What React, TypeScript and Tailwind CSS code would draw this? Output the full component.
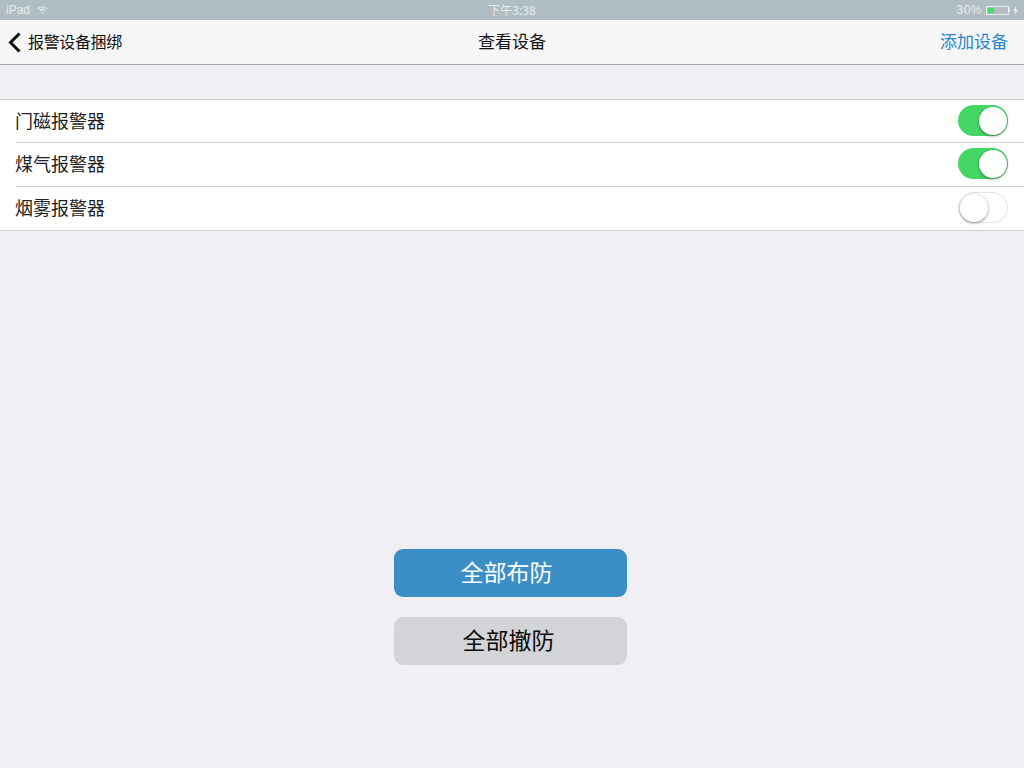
const devices = [
  { name: "门磁报警器", on: true },
  { name: "煤气报警器", on: true },
  { name: "烟雾报警器", on: false },
];

const cjk = "font-['Noto_Sans_CJK_SC','Liberation_Sans',sans-serif]";

const Toggle = ({ on }: { on: boolean }) => (
  <div
    className={`mb-[1px] flex h-[31px] w-[50px] items-center rounded-full p-px ${
      on ? "justify-end bg-[#44d766]" : "justify-start border border-[#e4e4e6] bg-white"
    }`}
  >
    <div className="h-[28px] w-[28px] rounded-full bg-white shadow-[0_1px_3px_rgba(0,0,0,0.45)]" />
  </div>
);

export default function App() {
  return (
    <div className={`flex h-[768px] w-[1024px] flex-col overflow-hidden bg-[#f0eff4] ${cjk}`}>
      <div className="grid h-5 grid-cols-3 items-center bg-[#b0bec4] px-[6px] text-[12px] text-[#e6ecef]">
        <div className="flex items-center gap-[7px]">
          <span className="font-['Liberation_Sans',sans-serif] text-[12px]">iPad</span>
          <svg width="11" height="8" viewBox="0 0 11 8" fill="none" stroke="#e6ecef" strokeWidth="1.2">
            <path d="M1 2.8 C3.6 0.4 7.4 0.4 10 2.8" />
            <path d="M2.8 4.6 C4.4 3.2 6.6 3.2 8.2 4.6" />
            <path d="M5.5 7.6 L4.3 6.2 C5 5.7 6 5.7 6.7 6.2 Z" fill="#e6ecef" stroke="none" />
          </svg>
        </div>
        <div className="text-center">下午3:38</div>
        <div className="flex items-center justify-end font-['Liberation_Sans',sans-serif] text-[12px]">
          <span className="tracking-[0.5px]">30%</span>
          <div className="ml-[4px] flex h-[9px] w-[23px] items-center border border-[#e6ecef] p-px">
            <div className="h-full w-[6px] bg-[#4cd964]" />
          </div>
          <div className="h-[4px] w-px bg-[#e6ecef]" />
          <svg className="ml-[3px]" width="5" height="9" viewBox="0 0 5 9">
            <path d="M3 0 L0 5 H2 L1.6 9 L5 3.8 H3 Z" fill="#e6ecef" />
          </svg>
        </div>
      </div>

      <div className="grid h-[45px] grid-cols-3 items-center border-b border-[#a9a9ab] bg-[#f6f6f7]">
        <div className="flex items-center text-[16px] tracking-[-0.35px] text-[#111]">
          <svg className="ml-[8px] mr-[7px]" width="13" height="21" viewBox="0 0 13 21" fill="none">
            <path d="M11.5 1.5 L2.5 10.5 L11.5 19.5" stroke="#111" strokeWidth="3" />
          </svg>
          <span className="pb-[2px]">报警设备捆绑</span>
        </div>
        <div className="pb-[2px] text-center text-[17px] text-[#111]">查看设备</div>
        <div className="pb-[2px] pr-4 text-right text-[17px] text-[#2a86c8]">添加设备</div>
      </div>

      <div className="mt-[34px] border-y border-[#cfcfd1] bg-white">
        {devices.map((device, index) => (
          <div key={device.name} className="pl-4">
            <div
              className={`flex h-[43.33px] items-center justify-between pr-4 ${
                index < devices.length - 1 ? "border-b border-[#cfcfd1]" : ""
              }`}
            >
              <span className="-ml-px pb-[2px] text-[18px] text-[#222]">{device.name}</span>
              <Toggle on={device.on} />
            </div>
          </div>
        ))}
      </div>

      <div className="ml-[394px] mt-[318px] flex w-[233px] flex-col gap-5">
        <button className="h-[48px] rounded-[9px] bg-[#3c8fc6] pb-[3px] pr-2 text-[23px] text-white">全部布防</button>
        <button className="h-[48px] rounded-[9px] bg-[#d3d4d7] pb-[3px] pr-1 text-[23px] text-[#0a0a0a]">全部撤防</button>
      </div>
    </div>
  );
}
